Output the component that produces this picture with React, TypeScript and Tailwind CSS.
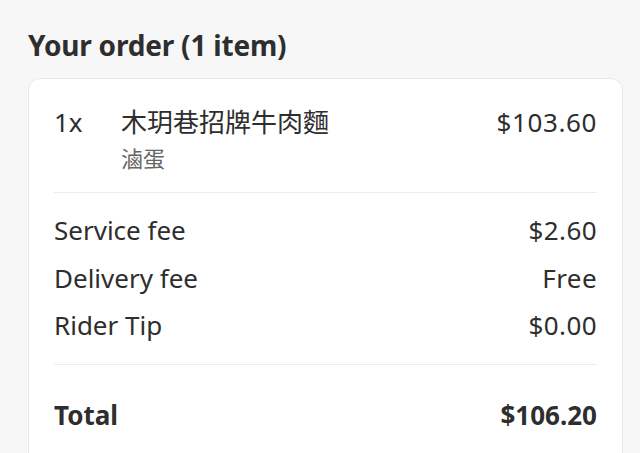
const FONT = '"Noto Sans", "Noto Sans CJK TC", sans-serif';

const FEES = [
  { label: 'Service fee', value: '$2.60' },
  { label: 'Delivery fee', value: 'Free' },
  { label: 'Rider Tip', value: '$0.00' },
];

export default function App() {
  return (
    <div
      className="h-[453px] overflow-hidden bg-[#f7f7f7] pl-[28px] pr-[17px] pt-[26px] text-[#2e2e2e]"
      style={{ fontFamily: FONT }}
    >
      <h2 className="text-[28px] font-bold leading-[38px] tracking-[-0.2px]">Your order (1 item)</h2>

      <div className="mt-[14px] rounded-[12px] border border-[#e8e8e8] bg-white px-[25px] pb-[60px] pt-[21px]">
        {/* item */}
        <div className="flex items-start border-b border-[#ececec] pb-[20px]">
          <span className="w-[67px] text-[26px] leading-[44px]">1x</span>
          <div className="flex-1">
            <div className="text-[26px] leading-[44px]">木玥巷招牌牛肉麵</div>
            <div className="text-[22px] leading-[28px] text-[#666666]">滷蛋</div>
          </div>
          <span className="text-[26px] leading-[44px] tracking-[0.6px]">$103.60</span>
        </div>

        {/* fees */}
        <div className="flex flex-col border-b border-[#ececec] py-[14px]">
          {FEES.map(f => (
            <div key={f.label} className="flex justify-between text-[26px] leading-[47.5px]">
              <span>{f.label}</span>
              <span className="tracking-[0.4px]">{f.value}</span>
            </div>
          ))}
        </div>

        {/* total */}
        <div className="flex justify-between pt-[30px] text-[26px] font-bold leading-[40px]">
          <span>Total</span>
          <span>$106.20</span>
        </div>
      </div>
    </div>
  );
}
